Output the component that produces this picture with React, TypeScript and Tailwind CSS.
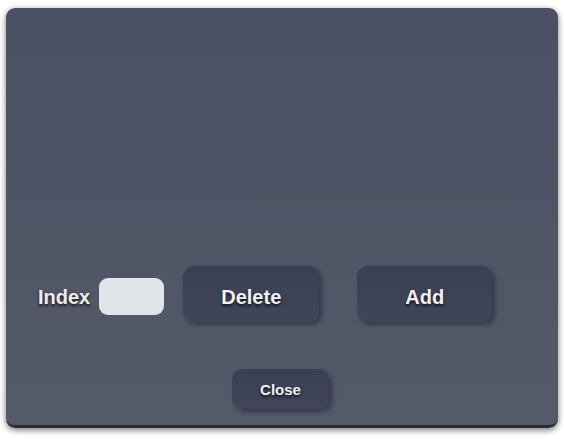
export default function App() {
  const btn =
    "flex items-center justify-center rounded-[10px] bg-gradient-to-b from-[#394053] to-[#3f4659] text-[#f4f0f0] font-bold shadow-[3px_3px_5px_rgba(0,0,0,0.35)] [text-shadow:0_2px_3px_rgba(0,0,0,0.75)]";

  return (
    <div
      className="w-[564px] h-[439px] bg-white pl-[6px] pt-[8px]"
      style={{ fontFamily: '"Liberation Sans", Arial, sans-serif' }}
    >
      <div className="w-[552px] h-[420px] rounded-[9px] border-b-[3px] border-[#2a2d33] bg-gradient-to-b from-[#4a5061] to-[#545a6a] shadow-[0_2px_6px_rgba(0,0,0,0.55)] flex flex-col pt-[258px]">
        {/* Controls row */}
        <div className="flex items-center h-[56px] pl-[32px]">
          <span className="pt-[5px] text-[20px] font-bold text-[#f2e9e9] [text-shadow:0_2px_3px_rgba(0,0,0,0.75)]">
            Index
          </span>
          <div className="ml-[9px] mt-[4px] w-[65px] h-[37px] rounded-[9px] bg-[#e1e4e9]" />
          <button className={btn + " ml-[19px] w-[136px] h-[56px] pt-[6px] text-[20px]"}>
            Delete
          </button>
          <button className={btn + " ml-[38px] w-[135px] h-[56px] pt-[6px] text-[20px]"}>
            Add
          </button>
        </div>

        {/* Close */}
        <div className="mt-[47px] pl-[226px]">
          <button className={btn + " w-[97px] h-[40px] pt-[2px] text-[15px]"}>Close</button>
        </div>
      </div>
    </div>
  );
}
